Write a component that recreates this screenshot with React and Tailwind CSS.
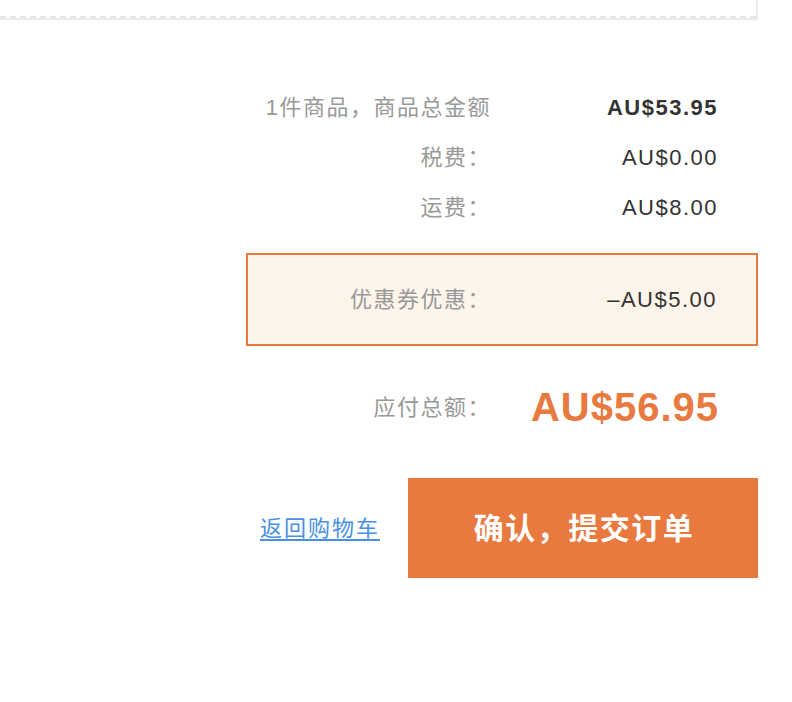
export default function App() {
  const font = "font-['Liberation_Sans','Noto_Sans_CJK_SC',sans-serif]";
  return (
    <div className={`w-[792px] h-[702px] bg-white overflow-hidden ${font}`}>
      <div className="w-[758px] h-[20px] border-r-2 border-b-2 border-[#ebebeb]">
        <div className="h-[18px] border-b-2 border-dashed border-[#e6e6e6]"></div>
      </div>

      <div className="ml-[246px] w-[512px] mt-[62px]">
        <div className="grid grid-cols-[245px_227px] h-[50px] items-center">
          <div className="text-right text-[#999999] text-[22px] tracking-[1.5px]">1件商品，商品总金额</div>
          <div className="text-right text-[#333333] font-bold text-[22px] tracking-[1.5px]">AU$53.95</div>
        </div>
        <div className="grid grid-cols-[245px_227px] h-[50px] items-center">
          <div className="text-right text-[#999999] text-[22px] tracking-[1.5px]">税费：</div>
          <div className="text-right text-[#333333] text-[22px] tracking-[1.5px]">AU$0.00</div>
        </div>
        <div className="grid grid-cols-[245px_227px] h-[50px] items-center">
          <div className="text-right text-[#999999] text-[22px] tracking-[1.5px]">运费：</div>
          <div className="text-right text-[#333333] text-[22px] tracking-[1.5px]">AU$8.00</div>
        </div>

        <div className="mt-[21px] h-[93px] border-2 border-[#e8793f] bg-[#fdf4ea] grid grid-cols-[243px_226px] items-center">
          <div className="text-right text-[#999999] text-[22px] tracking-[1.5px]">优惠券优惠：</div>
          <div className="text-right text-[#333333] text-[22px] tracking-[1.5px]">–AU$5.00</div>
        </div>

        <div className="mt-[36px] grid grid-cols-[245px_228px] h-[50px] items-center">
          <div className="text-right text-[#999999] text-[22px] tracking-[1.5px]">应付总额：</div>
          <div className="text-right text-[#e8793f] font-bold text-[40px] tracking-[1px] leading-none">AU$56.95</div>
        </div>

        <div className="mt-[46px] flex justify-end items-center gap-[28px]">
          <a href="#" className="text-[#4a90e2] underline text-[22px] tracking-[2px] underline-offset-[3px]">返回购物车</a>
          <button className="w-[350px] h-[100px] bg-[#e8793f] text-white font-bold text-[30px] tracking-[1.5px] pl-[2px]">确认，提交订单</button>
        </div>
      </div>
    </div>
  );
}
